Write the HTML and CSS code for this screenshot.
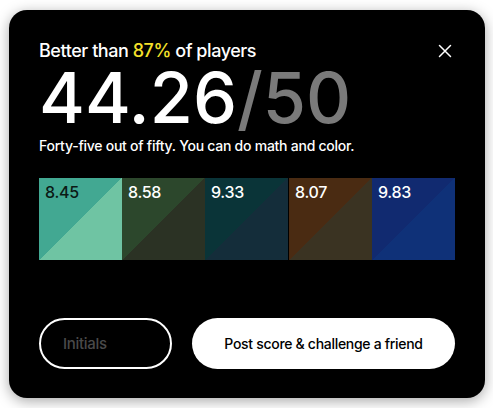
FILE: index.html
```html
<!DOCTYPE html>
<html>
<head>
<meta charset="utf-8">
<link rel="stylesheet" href="styles.css">
</head>
<body>
<div class="card">
  <div class="header">
    <div class="rank">Better than <span class="pct">87%</span> of players</div>
    <button class="close" aria-label="Close">
      <svg width="14" height="14" viewBox="0 0 14 14"><path d="M1.5 1.5L12.5 12.5M12.5 1.5L1.5 12.5" stroke="#fff" stroke-width="1.5" stroke-linecap="round"/></svg>
    </button>
  </div>
  <div class="score"><span class="got">44.26</span><span class="max">/50</span></div>
  <div class="tagline">Forty-five out of fifty. You can do math and color.</div>
  <div class="swatches">
    <div class="swatch s1"><span class="val dark">8.45</span></div>
    <div class="swatch s2"><span class="val">8.58</span></div>
    <div class="swatch s3"><span class="val">9.33</span></div>
    <div class="swatch s4"><span class="val">8.07</span></div>
    <div class="swatch s5"><span class="val">9.83</span></div>
  </div>
  <div class="actions">
    <input class="initials" type="text" placeholder="Initials">
    <button class="post">Post score &amp; challenge a friend</button>
  </div>
</div>
</body>
</html>
```
FILE: styles.css
```css
html, body {
  margin: 0;
  padding: 0;
  background: #ffffff;
}
body {
  width: 493px;
  height: 408px;
  overflow: hidden;
  font-family: Inter, "Noto Sans", sans-serif;
}
.card {
  box-sizing: border-box;
  margin: 10px 0 0 9px;
  width: 476px;
  height: 388px;
  background: #000;
  border-radius: 18px;
  box-shadow: 0 3px 14px rgba(0,0,0,0.35);
  padding: 30px 30px 0 30px;
  display: flex;
  flex-direction: column;
  color: #fff;
}
.header {
  display: flex;
  justify-content: space-between;
  align-items: center;
}
.rank {
  font-size: 18px;
  line-height: 22px;
  font-weight: 500;
  letter-spacing: -0.45px;
}
.pct { color: #f5e12a; }
.close {
  background: none;
  border: 0;
  padding: 0;
  margin-right: 3px;
  width: 14px;
  height: 14px;
  display: flex;
}
.score {
  font-size: 70px;
  line-height: 70px;
  font-weight: 500;
  letter-spacing: 0;
  margin-top: 1px;
}
.got { color: #fff; }
.max { color: #7a7a7a; }
.tagline {
  font-size: 14px;
  line-height: 18px;
  font-weight: 500;
  margin-top: 4px;
  letter-spacing: -0.25px;
}
.swatches {
  display: flex;
  margin-top: 23px;
  height: 82px;
}
.swatch {
  flex: 1;
  padding: 4px 6px;
}
.val {
  font-size: 16px;
  line-height: 20px;
  font-weight: 500;
  letter-spacing: -0.3px;
  color: #fff;
}
.val.dark { color: #0b1a15; }
.s1 { background: linear-gradient(to top left, #6fc4a3 50%, #42a892 50%); }
.s2 { background: linear-gradient(to top left, #2b3224 50%, #2c472c 50%); }
.s3 { background: linear-gradient(to top left, #142d3a 50%, #0a3438 50%); }
.s4 { background: linear-gradient(to top left, #3a3322 50%, #4a2b12 50%); border-left: 1px solid #000; }
.s5 { background: linear-gradient(to top left, #0f3178 50%, #112a70 50%); }
.actions {
  display: flex;
  gap: 20px;
  margin-top: 58px;
}
.initials {
  box-sizing: border-box;
  width: 133px;
  height: 51px;
  border: 2px solid #fff;
  border-radius: 26px;
  background: #000;
  color: #fff;
  font-family: Inter, sans-serif;
  font-size: 15px;
  font-weight: 500;
  letter-spacing: -0.3px;
  padding: 0 0 0 22px;
  outline: none;
}
.initials::placeholder { color: #4a4a4a; }
.post {
  flex: 1;
  height: 51px;
  border: 0;
  border-radius: 26px;
  background: #fff;
  color: #000;
  font-family: Inter, sans-serif;
  font-size: 14px;
  font-weight: 500;
  letter-spacing: -0.3px;
}
```
